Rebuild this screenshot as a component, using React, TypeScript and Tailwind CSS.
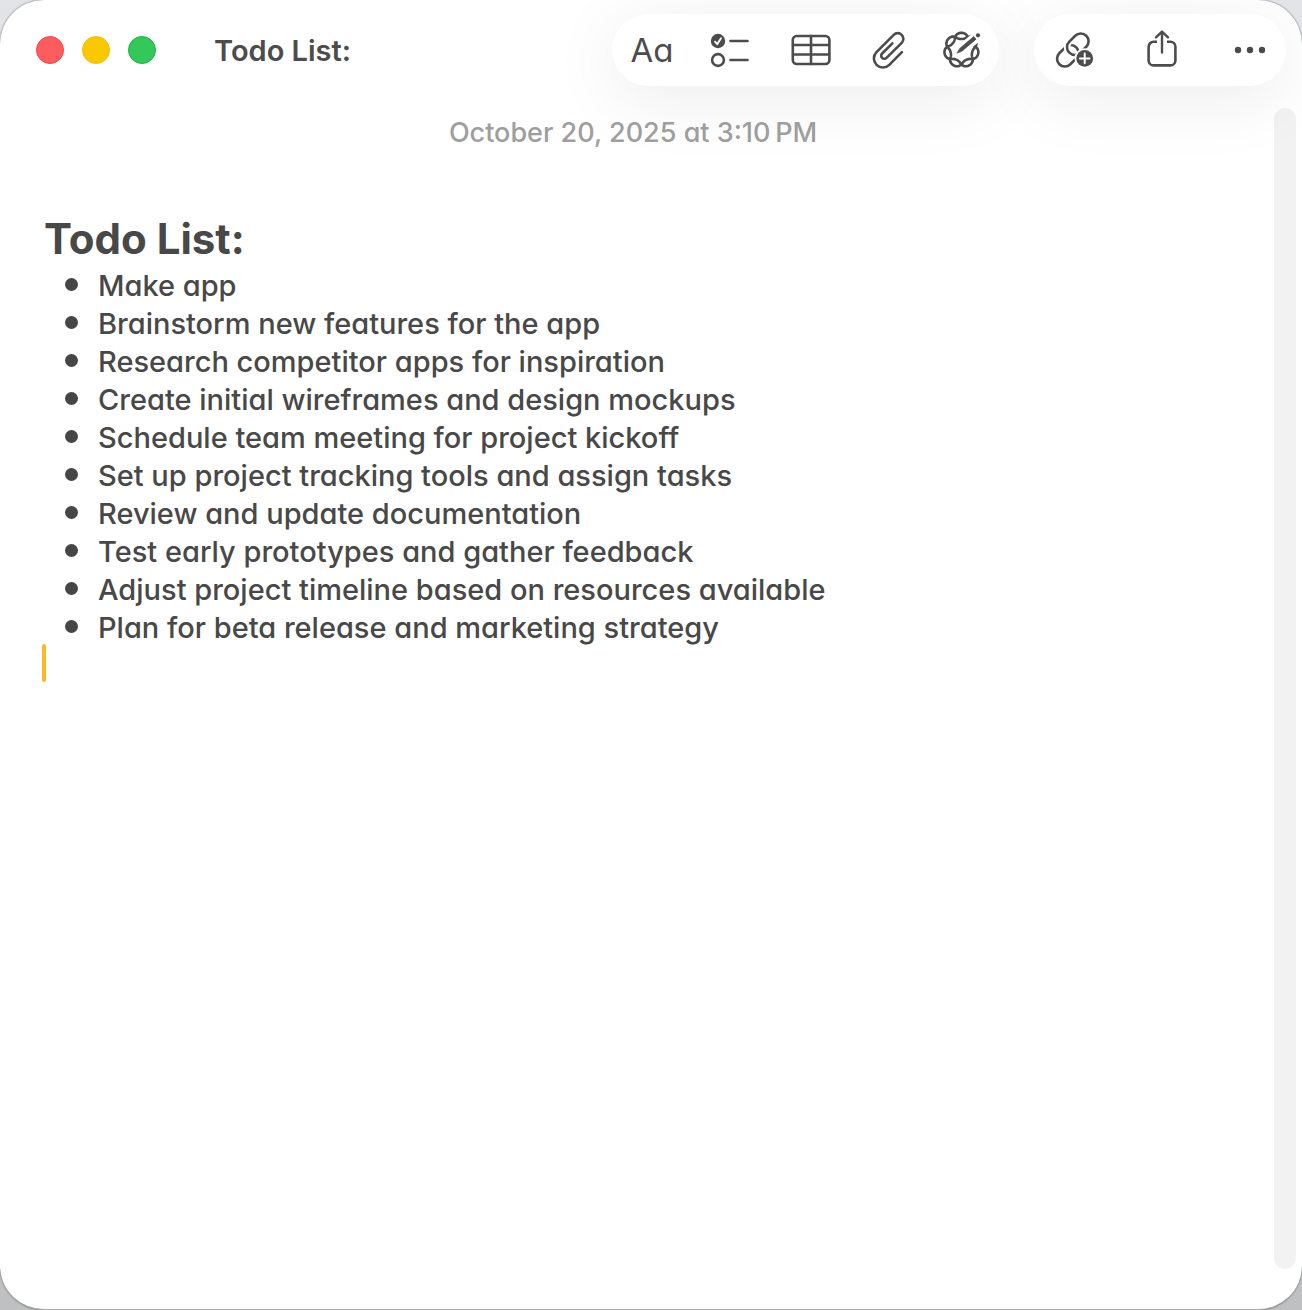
import React from "react";

const tasks = [
  "Make app",
  "Brainstorm new features for the app",
  "Research competitor apps for inspiration",
  "Create initial wireframes and design mockups",
  "Schedule team meeting for project kickoff",
  "Set up project tracking tools and assign tasks",
  "Review and update documentation",
  "Test early prototypes and gather feedback",
  "Adjust project timeline based on resources available",
  "Plan for beta release and marketing strategy",
];

// Seven-lobed interlaced rosette: one closed curve that winds round twice.
function rosette(cx: number, cy: number) {
  const points: string[] = [];
  for (let i = 0; i < 280; i++) {
    const t = (i / 280) * Math.PI * 4;
    const c = Math.cos(3.5 * t);
    const r = 13.6 + 3.1 * c + 0.5 * c * c;
    const a = t - Math.PI / 2 + 0.05 * Math.sin(3.5 * t) + 0.05 * Math.sin(7 * t);
    points.push(`${(cx + r * Math.cos(a)).toFixed(2)} ${(cy + r * Math.sin(a)).toFixed(2)}`);
  }
  return `M${points.join("L")}Z`;
}

function Icon({ children }: { children: React.ReactNode }) {
  return (
    <svg
      viewBox="0 0 44 44"
      className="size-11 shrink-0"
      fill="none"
      stroke="currentColor"
      strokeWidth="2.6"
      strokeLinecap="round"
      strokeLinejoin="round"
      aria-hidden="true"
    >
      {children}
    </svg>
  );
}

function ToolButton({
  label,
  width = "w-11",
  children,
}: {
  label: string;
  width?: string;
  children: React.ReactNode;
}) {
  return (
    <button type="button" aria-label={label} className={`flex h-11 shrink-0 items-center justify-center ${width}`}>
      {children}
    </button>
  );
}

function ChecklistIcon() {
  return (
    <Icon>
      <circle cx="10" cy="13" r="7.2" fill="currentColor" stroke="none" />
      <path d="M7 13.6l2.2 2.6 3.8-6" stroke="#fff" strokeWidth="1.8" />
      <circle cx="10" cy="32" r="5.9" />
      <path d="M22.5 13H39.5M22.5 32H39.5" />
    </Icon>
  );
}

function TableIcon() {
  return (
    <Icon>
      <rect x="3.8" y="8" width="36.6" height="28" rx="4" />
      <path d="M4 17H40M4 26.5H40M22 8V36" />
    </Icon>
  );
}

function ClipIcon() {
  return (
    <Icon>
      <path
        transform="translate(-1 0)"
        d="M34.9 24.2L22.3 36.8A9 9 0 0 1 9.5 24.1L26.7 6.8A5.6 5.6 0 0 1 34.7 14.8L19.5 29.9A3.1 3.1 0 0 1 15.1 25.5L25.4 15.3"
      />
    </Icon>
  );
}

function MarkupIcon() {
  return (
    <Icon>
      <path d={rosette(21.4, 22)} />
      <path d="M19 24L30 14.5" stroke="#fff" strokeWidth="8" />
      <path d="M27 17L44 2.5" stroke="#fff" strokeWidth="10.5" strokeLinecap="butt" />
      <path d="M17.2 24.8L20 20.3L33.8 8.6L36 11.2L22.2 22.9Z" fill="currentColor" strokeWidth="0.8" />
      <circle cx="38" cy="7.3" r="2.1" fill="currentColor" stroke="none" />
    </Icon>
  );
}

function LinkIcon() {
  return (
    <Icon>
      <rect x="3.8" y="20" width="24" height="15.6" rx="7.8" transform="rotate(-45 15.8 27.8)" />
      <path d="M17.3 13.65A7.8 7.8 0 0 0 15.4 21.4" stroke="#fff" strokeWidth="6.4" strokeLinecap="butt" />
      <rect x="13.8" y="8.4" width="24" height="15.6" rx="7.8" transform="rotate(-45 25.8 16.2)" />
      <circle cx="32.7" cy="30.4" r="10.2" fill="#fff" stroke="none" />
      <circle cx="32.7" cy="30.4" r="8.4" fill="currentColor" stroke="none" />
      <path d="M27.9 30.4H37.5M32.7 25.6V35.2" stroke="#fff" strokeWidth="2" />
    </Icon>
  );
}

function ShareIcon() {
  return (
    <Icon>
      <path
        d="M17 13.8H13.6A5 5 0 0 0 8.6 18.8V32.4A5 5 0 0 0 13.6 37.4H30.4A5 5 0 0 0 35.4 32.4V18.8A5 5 0 0 0 30.4 13.8H27"
        strokeLinecap="butt"
      />
      <path d="M22 4V24.6M16 9.4L22 3.6L28 9.4" strokeWidth="2.4" />
    </Icon>
  );
}

function MoreIcon() {
  return (
    <Icon>
      <g fill="currentColor" stroke="none">
        <circle cx="10" cy="22" r="3.2" />
        <circle cx="22" cy="22" r="3.2" />
        <circle cx="34" cy="22" r="3.2" />
      </g>
    </Icon>
  );
}

export default function App() {
  return (
    <div className="min-h-screen bg-linear-to-b from-[#e2e4e7] to-[#bfc0c2] font-['Inter',sans-serif] text-[#484848] [font-feature-settings:'cv11']">
      <main className="flex min-h-screen flex-col overflow-hidden rounded-[44px] border-b border-[#a8a8a8] bg-white shadow-[0_0_2px_rgba(0,0,0,0.6)]">
        <header className="flex h-[100px] items-center pr-4 pl-9 text-[#4c4c4c]">
          <div className="flex gap-[18px]">
            <button type="button" aria-label="Close" className="size-7 rounded-full border border-[#f9404a] bg-[#ff5c60]" />
            <button type="button" aria-label="Minimize" className="size-7 rounded-full border border-[#f2bd00] bg-[#fac800]" />
            <button type="button" aria-label="Zoom" className="size-7 rounded-full border border-[#12b83c] bg-[#34c759]" />
          </div>
          <h1 className="ml-[58px] flex-1 pt-0.5 text-[29px] font-semibold whitespace-nowrap">Todo List:</h1>

          <div className="flex gap-[35px]">
            <div className="flex h-18 items-center gap-[34px] rounded-full bg-white pr-[19px] pl-[18px] shadow-[0_12px_70px_rgba(0,0,0,0.08)]">
              <button type="button" aria-label="Format" className="flex h-11 w-11 items-center justify-center pt-0.5 text-[33px]">
                Aa
              </button>
              <ToolButton label="Checklist"><ChecklistIcon /></ToolButton>
              <ToolButton label="Table" width="w-[50px]"><TableIcon /></ToolButton>
              <ToolButton label="Attach file" width="w-10"><ClipIcon /></ToolButton>
              <ToolButton label="Markup" width="w-9"><MarkupIcon /></ToolButton>
            </div>
            <div className="flex h-18 items-center gap-11 rounded-full bg-white pr-[14px] pl-[18px] shadow-[0_12px_70px_rgba(0,0,0,0.08)]">
              <ToolButton label="Add link"><LinkIcon /></ToolButton>
              <ToolButton label="Share"><ShareIcon /></ToolButton>
              <ToolButton label="More"><MoreIcon /></ToolButton>
            </div>
          </div>
        </header>

        <div className="flex flex-1">
          <article className="flex-1 pr-[52px] pl-11">
            <p className="mt-[13px] text-center text-[27px] leading-10 font-medium text-[#9e9e9e]">
              October 20, 2025 at 3:10&#8239;PM
            </p>
            <h2 className="mt-[58px] mb-px text-[42px] leading-[55px] font-bold">Todo List:</h2>
            <ul className="text-[29px] leading-[38px] font-medium">
              {tasks.map((task) => (
                <li key={task} className="flex items-center pl-[21px]">
                  <span className="mr-5 mb-1 size-[13px] shrink-0 rounded-full bg-[#464646]" />
                  {task}
                </li>
              ))}
            </ul>
            <div className="-mt-[3px] -ml-0.5 h-[38px] w-1 rounded-full bg-[#fdb827]" />
          </article>
          <div className="mt-2 mr-1.5 mb-10 w-[22px] rounded-full bg-black/5" />
        </div>
      </main>
    </div>
  );
}
